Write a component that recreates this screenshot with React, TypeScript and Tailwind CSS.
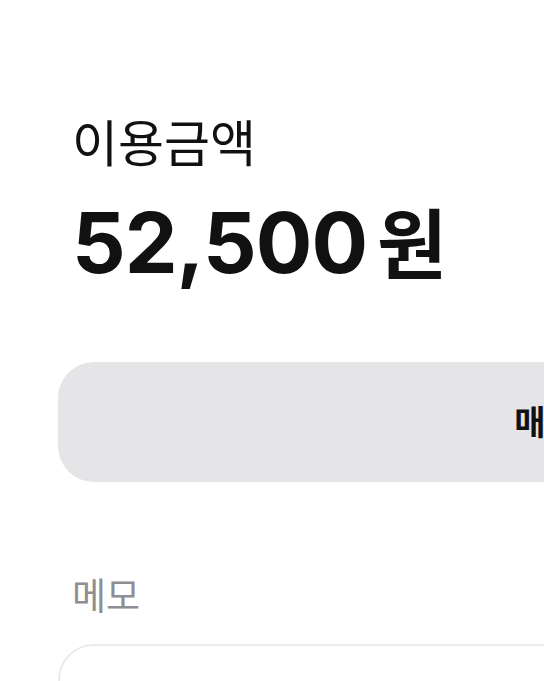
export default function App() {
  return (
    <div
      className="w-[544px] h-[681px] overflow-hidden bg-white"
      style={{ fontFamily: '"Inter", "Noto Sans CJK KR", sans-serif' }}
    >
      <div className="w-[1224px] px-[58px] pt-[114px]">
        {/* Amount */}
        <div className="px-[14px]">
          <div className="text-[50px] leading-[60px] text-[#111111]">이용금액</div>
          <div className="mt-[21px] flex items-baseline gap-[10px] text-[#111111]">
            <span className="text-[84px] leading-[96px] font-bold tracking-[-1px]">52,500</span>
            <span className="text-[76px] leading-[96px] font-bold">원</span>
          </div>
        </div>

        {/* Action button */}
        <button className="mt-[69px] w-full h-[120px] rounded-[36px] bg-[#e5e5e7] flex items-center justify-center text-[34px] font-bold text-[#111111]">
          매장 결제하기
        </button>

        {/* Memo */}
        <div className="mt-[91px] px-[14px] text-[37px] leading-[48px] text-[#8e8e93]">메모</div>
        <div className="mt-[23px] h-[200px] rounded-[36px] border-2 border-[#ebebeb]" />
      </div>
    </div>
  );
}
